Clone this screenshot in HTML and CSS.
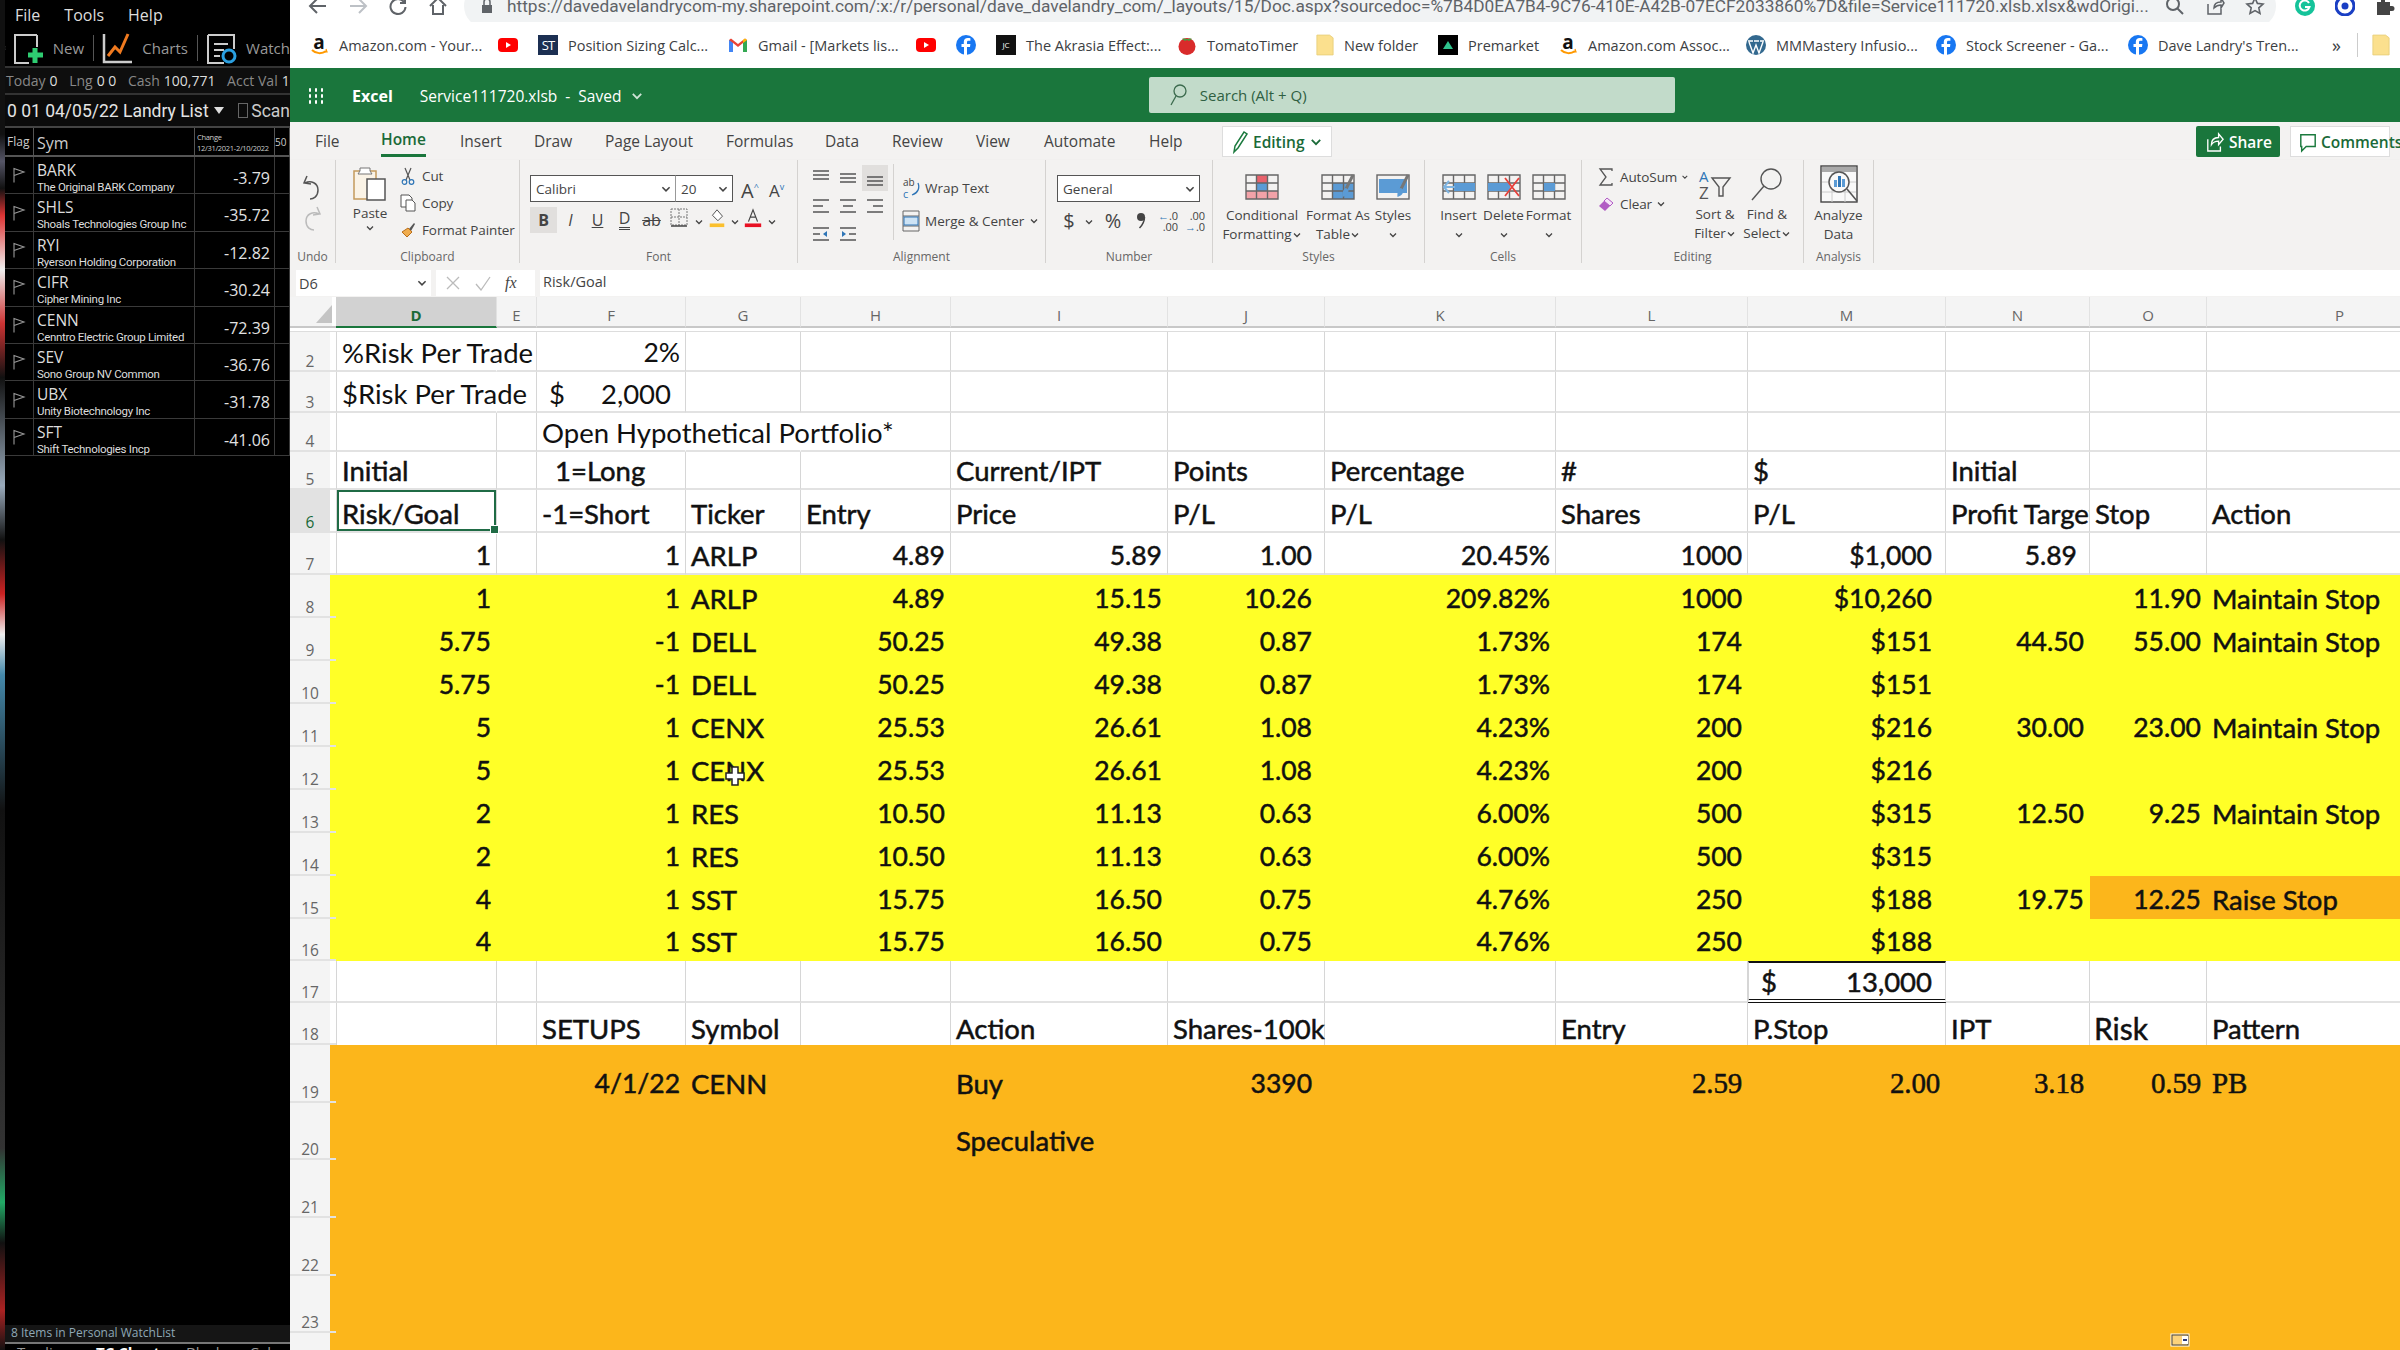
FILE: index.html
```html
<!DOCTYPE html>
<html lang="en">
<head>
    <meta charset="UTF-8">
    <title>Service111720.xlsb</title>
    <link rel="stylesheet" href="styles.css">
</head>
<body>
<svg class="sprite">
    <symbol id="chev" viewBox="0 0 10 10"><path d="M2 3.5l3 3 3-3" fill="none" stroke="currentColor" stroke-width="1.3"></path></symbol>
    <symbol id="yt" viewBox="0 0 20 20"><rect x="0" y="3" width="20" height="14" rx="4" fill="#f00"></rect><path d="M8 7l5 3-5 3z" fill="#fff"></path></symbol>
    <symbol id="fb" viewBox="0 0 20 20"><circle cx="10" cy="10" r="10" fill="#1877f2"></circle><path d="M11 20v-8h3l.4-3H11V7.300c0-1 .4-1.500 1.600-1.500h1.800V3.200c-1-.1-1.800-.2-2.600-.2-2.500 0-4 1.500-4 4V9H5.500v3H8v8z" fill="#fff"></path></symbol>
    <symbol id="folder" viewBox="0 0 20 24"><path d="M1 1h14l4 3v19H1z" fill="#fbe08e" stroke="#e9cf7c"></path></symbol>
    <symbol id="amz" viewBox="0 0 20 24"><path d="M3 17c4 4 10 4 14 1" fill="none" stroke="#f90" stroke-width="2"></path><path d="M17 16l1 3-3 0" fill="none" stroke="#f90" stroke-width="1.200"></path></symbol>
    <symbol id="cellgrid" viewBox="0 0 34 26"><path d="M1 1h32v24H1zM1 9h32M1 17h32M11.500 1v24M22.500 1v24" fill="none" stroke="#666" stroke-width="1.400"></path></symbol>
    <symbol id="brush" viewBox="0 0 14 26"><path d="M12 1L5 15" stroke="#777" stroke-width="3" fill="none"></path><path d="M5 14c-3 1-4 5-3.500 9 3-1 6-3 6-7z" fill="#5b9bd5"></path></symbol>
    <symbol id="al-l" viewBox="0 0 18 18"><path d="M1 3h16M1 9h10M1 15h16" stroke="#555" stroke-width="1.300"></path></symbol>
    <symbol id="al-c" viewBox="0 0 18 18"><path d="M1 3h16M4 9h10M1 15h16" stroke="#555" stroke-width="1.300"></path></symbol>
    <symbol id="al-r" viewBox="0 0 18 18"><path d="M1 3h16M7 9h10M1 15h16" stroke="#555" stroke-width="1.300"></path></symbol>
    <symbol id="al-t" viewBox="0 0 18 18"><path d="M1 2h16M1 6h16M1 10h16" stroke="#555" stroke-width="1.300"></path></symbol>
    <symbol id="al-m" viewBox="0 0 18 18"><path d="M1 5h16M1 9h16M1 13h16" stroke="#555" stroke-width="1.300"></path></symbol>
    <symbol id="al-b" viewBox="0 0 18 18"><path d="M1 8h16M1 12h16M1 16h16" stroke="#555" stroke-width="1.300"></path></symbol>
    <symbol id="flag" viewBox="0 0 14 16"><path d="M2 15.500V1.500l10 3.500L2 8.500" fill="none" stroke="#999" stroke-width="1.100"></path></symbol>
</svg>

<div class="page">
    <aside class="side">
        <div class="side-menu"><span>File</span><span>Tools</span><span>Help</span></div>
        <div class="side-tools">
            <svg class="grip" viewBox="0 0 4 24"><path d="M2 3v2M2 11v2M2 19v2" stroke="#999" stroke-width="3"></path></svg>
            <svg class="tool-ico" viewBox="0 0 32 32"><path d="M24 3H2v28h14" fill="none" stroke="#ccc" stroke-width="2"></path><path d="M24 3v12" stroke="#ccc" stroke-width="2"></path><path d="M22 16v15M15 23h15" stroke="#2ecc71" stroke-width="5"></path></svg>
            <span class="tool-txt">New</span><i class="tool-sep"></i>
            <svg class="tool-ico" viewBox="0 0 32 32"><path d="M2 2v28h28" fill="none" stroke="#ccc" stroke-width="2.500"></path><path d="M6 24l7-9 5 5 8-18" fill="none" stroke="#f07a1f" stroke-width="3"></path></svg>
            <span class="tool-txt">Charts</span><i class="tool-sep"></i>
            <svg class="tool-ico" viewBox="0 0 32 32"><path d="M2 3h26v14M2 3v28h16" fill="none" stroke="#ccc" stroke-width="2"></path><path d="M8 12h14M8 18h10M8 24h6" stroke="#ccc" stroke-width="2"></path><circle cx="23" cy="24" r="6" fill="none" stroke="#2a9fe0" stroke-width="3"></circle></svg>
            <span class="tool-txt">Watch</span>
        </div>
        <div class="side-stats"><span>Today</span> <b>0</b> &nbsp;<span>Lng</span> <b>0 0</b> &nbsp;<span>Cash</span> <b>100,771</b> &nbsp;<span>Acct Val</span> <b>100</b></div>
        <div class="side-title">
            <span>0 01 04/05/22 Landry List</span><i class="caret"></i><i class="check"></i><span class="scan">Scan</span>
        </div>
        <div class="wl-head">
            <span class="wl-flag">Flag</span>
            <span class="wl-sym">Sym</span>
            <span class="wl-chg">Change<br>12/31/2021-2/10/2022</span>
            <span class="wl-50">50</span>
        </div>
        <div class="wl-row"><span class="wl-f"><svg><use href="#flag"></use></svg></span><span class="wl-n"><b>BARK</b><small>The Original BARK Company</small></span><span class="wl-v">-3.79</span><span></span></div>
        <div class="wl-row"><span class="wl-f"><svg><use href="#flag"></use></svg></span><span class="wl-n"><b>SHLS</b><small>Shoals Technologies Group Inc</small></span><span class="wl-v">-35.72</span><span></span></div>
        <div class="wl-row"><span class="wl-f"><svg><use href="#flag"></use></svg></span><span class="wl-n"><b>RYI</b><small>Ryerson Holding Corporation</small></span><span class="wl-v">-12.82</span><span></span></div>
        <div class="wl-row"><span class="wl-f"><svg><use href="#flag"></use></svg></span><span class="wl-n"><b>CIFR</b><small>Cipher Mining Inc</small></span><span class="wl-v">-30.24</span><span></span></div>
        <div class="wl-row"><span class="wl-f"><svg><use href="#flag"></use></svg></span><span class="wl-n"><b>CENN</b><small>Cenntro Electric Group Limited</small></span><span class="wl-v">-72.39</span><span></span></div>
        <div class="wl-row"><span class="wl-f"><svg><use href="#flag"></use></svg></span><span class="wl-n"><b>SEV</b><small>Sono Group NV Common</small></span><span class="wl-v">-36.76</span><span></span></div>
        <div class="wl-row"><span class="wl-f"><svg><use href="#flag"></use></svg></span><span class="wl-n"><b>UBX</b><small>Unity Biotechnology Inc</small></span><span class="wl-v">-31.78</span><span></span></div>
        <div class="wl-row"><span class="wl-f"><svg><use href="#flag"></use></svg></span><span class="wl-n"><b>SFT</b><small>Shift Technologies Incp</small></span><span class="wl-v">-41.06</span><span></span></div>
        <div class="side-fill"></div>
        <div class="side-status">8 Items in Personal WatchList</div>
        <div class="side-tabs"><span>Trading</span><span class="on">TC Chart</span><span>Block</span><span>Calc</span></div>
    </aside>

    <main class="main">
        <div class="urlbar">
            <div class="urlbar-in">
                <svg class="nav" viewBox="0 0 20 20"><path d="M18 10H3M9 3l-7 7 7 7" fill="none" stroke="#5f6368" stroke-width="2"></path></svg>
                <svg class="nav" viewBox="0 0 20 20"><path d="M2 10h15M11 3l7 7-7 7" fill="none" stroke="#bdc1c6" stroke-width="2"></path></svg>
                <svg class="nav" viewBox="0 0 20 20"><path d="M16 6a7.500 7.500 0 1 0 1.500 5M17 2v5h-5" fill="none" stroke="#5f6368" stroke-width="2"></path></svg>
                <svg class="nav" viewBox="0 0 20 20"><path d="M2 10l8-8 8 8M5 9v9h10V9" fill="none" stroke="#5f6368" stroke-width="2"></path></svg>
                <div class="pill">
                    <svg class="lock" viewBox="0 0 14 16"><rect x="2" y="7" width="10" height="8" fill="#5f6368"></rect><path d="M4 7V4a3 3 0 0 1 6 0v3" fill="none" stroke="#5f6368" stroke-width="1.500"></path></svg>
                    <span class="url">https://davedavelandrycom-my.sharepoint.com/:x:/r/personal/dave_davelandry_com/_layouts/15/Doc.aspx?sourcedoc=%7B4D0EA7B4-9C76-410E-A42B-07ECF2033860%7D&amp;file=Service111720.xlsb.xlsx&amp;wdOrigi...</span>
                    <svg class="pill-ico" viewBox="0 0 20 20"><circle cx="8" cy="8" r="6" fill="none" stroke="#5f6368" stroke-width="2"></circle><path d="M12 12l6 6" stroke="#5f6368" stroke-width="2"></path></svg>
                    <svg class="pill-ico" viewBox="0 0 20 20"><path d="M3 8v10h13v-5M9 12c0-4 3-6 7-6V2l3 5-3 5V9c-3 0-5 1-7 3z" fill="none" stroke="#5f6368" stroke-width="1.500"></path></svg>
                    <svg class="pill-ico" viewBox="0 0 20 20"><path d="M10 2l2.400 5.400 5.600.6-4.200 3.800 1.200 5.700-5-2.900-5 2.900 1.200-5.700L2 8l5.600-.6z" fill="none" stroke="#5f6368" stroke-width="1.600"></path></svg>
                </div>
                <div class="exts">
                    <svg viewBox="0 0 20 20"><circle cx="10" cy="10" r="10" fill="#15c39a"></circle><path d="M14 7a5 5 0 1 0 .5 4H10" fill="none" stroke="#fff" stroke-width="2"></path></svg>
                    <svg viewBox="0 0 20 20"><circle cx="10" cy="10" r="9" fill="#fff" stroke="#1a3fc4" stroke-width="3"></circle><circle cx="10" cy="10" r="3.500" fill="#1a3fc4"></circle></svg>
                    <svg viewBox="0 0 20 20"><path d="M2 6h4V3a2 2 0 0 1 4 0v3h5v4h2a2.500 2.500 0 0 1 0 5h-2v4H2z" fill="#444"></path></svg>
                </div>
            </div>
        </div>

        <div class="bookmarks">
            <span class="bm"><span class="fav-a"><b>a</b><svg><use href="#amz"></use></svg></span>Amazon.com - Your...</span>
            <span class="bm"><svg class="fav"><use href="#yt"></use></svg></span>
            <span class="bm"><span class="fav-st">ST</span>Position Sizing Calc...</span>
            <span class="bm"><svg class="fav" viewBox="0 0 20 20"><path d="M1 17V5l2-1.500L10 9l7-5.500L19 5v12h-4V8l-5 4-5-4v9z" fill="#ea4335"></path><path d="M1 5v12h4V8z" fill="#4285f4"></path><path d="M19 5v12h-4V8z" fill="#34a853"></path><path d="M15 8l4-3-2-1.500-2 1.500z" fill="#fbbc04"></path></svg>Gmail - [Markets lis...</span>
            <span class="bm"><svg class="fav"><use href="#yt"></use></svg></span>
            <span class="bm"><svg class="fav"><use href="#fb"></use></svg></span>
            <span class="bm"><span class="fav-jc">JC</span>The Akrasia Effect:...</span>
            <span class="bm"><svg class="fav" viewBox="0 0 20 20"><circle cx="10" cy="11.500" r="8.500" fill="#d92b2b"></circle><path d="M5 4c2-1 3 0 5 0s3-1 5 0l-3 2-2-1-2 1z" fill="#4a9b3f"></path></svg>TomatoTimer</span>
            <span class="bm"><svg class="fav-f"><use href="#folder"></use></svg>New folder</span>
            <span class="bm"><svg class="fav" viewBox="0 0 20 20"><rect width="20" height="20" fill="#000"></rect><path d="M10 6l5 8H5z" fill="#2fc38d"></path></svg>Premarket</span>
            <span class="bm"><span class="fav-a"><b>a</b><svg><use href="#amz"></use></svg></span>Amazon.com Assoc...</span>
            <span class="bm"><svg class="fav" viewBox="0 0 20 20"><circle cx="10" cy="10" r="10" fill="#33698f"></circle><path d="M3 7l4 11 3-8 3 8 4-11M2 6h5M8 6h5M14 6h4" fill="none" stroke="#fff" stroke-width="1.400"></path></svg>MMMastery Infusio...</span>
            <span class="bm"><svg class="fav"><use href="#fb"></use></svg>Stock Screener - Ga...</span>
            <span class="bm"><svg class="fav"><use href="#fb"></use></svg>Dave Landry's Tren...</span>
            <span class="bm more">&raquo;</span>
            <span class="bm"><svg class="fav-f"><use href="#folder"></use></svg></span>
        </div>

        <div class="xl-bar">
            <svg class="waffle" viewBox="0 0 18 18"><path d="M2 3h2M8 3h2M14 3h2M2 9h2M8 9h2M14 9h2M2 15h2M8 15h2M14 15h2" stroke="#fff" stroke-width="3.400"></path></svg>
            <b class="xl-name">Excel</b>
            <span class="xl-file">Service111720.xlsb &nbsp;-&nbsp; Saved</span>
            <svg class="xl-chev"><use href="#chev"></use></svg>
            <div class="xl-search">
                <svg viewBox="0 0 18 24"><circle cx="11" cy="8" r="6" fill="none" stroke="#3c6b4e" stroke-width="1.300"></circle><path d="M7 13l-5 9" stroke="#3c6b4e" stroke-width="1.300"></path></svg>
                Search (Alt + Q)
            </div>
        </div>

        <div class="tabs">
            <span>File</span><span class="tab-on">Home</span><span>Insert</span><span>Draw</span><span>Page Layout</span><span>Formulas</span><span>Data</span><span>Review</span><span>View</span><span>Automate</span><span>Help</span>
            <span class="editing">
                <svg viewBox="0 0 18 24"><path d="M3 22l1-6L13 2l3 2-9 14zM3 22l4-4" fill="none" stroke="#1b7a3e" stroke-width="1.500"></path></svg>
                Editing
                <svg class="ed-chev"><use href="#chev"></use></svg>
            </span>
            <span class="share">
                <svg viewBox="0 0 20 24"><path d="M2 9v13h14v-5M6 15c0-5 3-8 8-8V3l5 6-5 6v-4c-4 0-6 1-8 4z" fill="none" stroke="#fff" stroke-width="1.500"></path></svg>
                Share
            </span>
            <span class="comments">
                <svg viewBox="0 0 20 24"><path d="M2 4h16v13H8l-5 5v-5H2z" fill="none" stroke="#1b7a3e" stroke-width="1.600"></path></svg>
                Comments
            </span>
        </div>

        <div class="ribbon">
            <div class="group g-undo">
                <div class="group-body col">
                    <svg class="undo" viewBox="0 0 20 28"><path d="M5 2L2 9l7 1M3 9c6-3 13 0 13 7s-5 9-8 9" fill="none" stroke="#555" stroke-width="1.500"></path></svg>
                    <svg class="undo" viewBox="0 0 20 28"><path d="M15 2l3 7-7 1M17 9C11 6 4 9 4 16s5 9 8 9" fill="none" stroke="#bbb" stroke-width="1.500"></path></svg>
                </div>
                <div class="group-label">Undo</div>
            </div>

            <div class="group g-clip">
                <div class="group-body">
                    <div class="big paste">
                        <svg viewBox="0 0 36 36"><rect x="2" y="6" width="22" height="28" fill="#faf3e6" stroke="#c49a5c" stroke-width="1.500"></rect><path d="M8 6V3h10v3l2 3H6z" fill="#fff" stroke="#777"></path><rect x="15" y="14" width="18" height="21" fill="#fff" stroke="#555" stroke-width="1.500"></rect></svg>
                        <span>Paste</span>
                        <svg class="chev"><use href="#chev"></use></svg>
                    </div>
                    <div class="small-list">
                        <span><svg viewBox="0 0 16 18"><path d="M5 1l5 12M11 1L6 13" stroke="#555" stroke-width="1.200"></path><circle cx="4.500" cy="15" r="2.300" fill="none" stroke="#2e75b6" stroke-width="1.200"></circle><circle cx="11.500" cy="15" r="2.300" fill="none" stroke="#2e75b6" stroke-width="1.200"></circle></svg>Cut</span>
                        <span><svg viewBox="0 0 16 18"><path d="M1 1h8l3 3v9H1z" fill="#fff" stroke="#555"></path><path d="M6 6h6l3 3v8H6z" fill="#fff" stroke="#555"></path></svg>Copy</span>
                        <span><svg viewBox="0 0 16 18"><path d="M9 8l5-6 1 1-4 7z" fill="#555"></path><path d="M8 7l4 4-5 5-5-5z" fill="#f0ad4e" stroke="#b96e1a"></path></svg>Format Painter</span>
                    </div>
                </div>
                <div class="group-label">Clipboard</div>
            </div>

            <div class="group g-font">
                <div class="group-body col">
                    <div class="font-top">
                        <span class="combo font-name">Calibri<svg><use href="#chev"></use></svg></span>
                        <span class="combo font-size">20<svg><use href="#chev"></use></svg></span>
                        <span class="grow">A<sup>^</sup></span>
                        <span class="shrink">A<sup>v</sup></span>
                    </div>
                    <div class="font-bot">
                        <span class="fb-on"><b>B</b></span>
                        <span><i>I</i></span>
                        <span><u>U</u></span>
                        <span class="dbl">D</span>
                        <span><s>ab</s></span>
                        <span><svg viewBox="0 0 18 20"><path d="M1 1h16v16H1zM9 1v16M1 9h16" fill="none" stroke="#777" stroke-dasharray="2 1"></path><path d="M1 18h16" stroke="#444" stroke-width="1.500"></path></svg></span>
                        <span><svg class="chev"><use href="#chev"></use></svg></span>
                        <span><svg viewBox="0 0 18 22"><path d="M9 2l6 7-5 5-6-6z" fill="#fff" stroke="#444"></path><rect x="1" y="17" width="16" height="4" fill="#fbc02d"></rect></svg></span>
                        <span><svg class="chev"><use href="#chev"></use></svg></span>
                        <span><svg viewBox="0 0 18 22"><path d="M4 15L9 2l5 13M6 10h6" fill="none" stroke="#444" stroke-width="1.300"></path><rect x="0" y="17" width="18" height="4" fill="#e81123"></rect></svg></span>
                        <span><svg class="chev"><use href="#chev"></use></svg></span>
                    </div>
                </div>
                <div class="group-label">Font</div>
            </div>

            <div class="group g-align">
                <div class="group-body">
                    <div class="align-grid">
                        <span><svg><use href="#al-t"></use></svg></span><span><svg><use href="#al-m"></use></svg></span><span class="al-on"><svg><use href="#al-b"></use></svg></span>
                        <span><svg><use href="#al-l"></use></svg></span><span><svg><use href="#al-c"></use></svg></span><span><svg><use href="#al-r"></use></svg></span>
                        <span><svg viewBox="0 0 18 18"><path d="M1 3h16M1 9h7M1 15h16" stroke="#555" stroke-width="1.300"></path><path d="M15 6l-4 3 4 3z" fill="#2e75b6"></path></svg></span>
                        <span><svg viewBox="0 0 18 18"><path d="M1 3h16M10 9h7M1 15h16" stroke="#555" stroke-width="1.300"></path><path d="M3 6l4 3-4 3z" fill="#2e75b6"></path></svg></span>
                    </div>
                    <div class="align-right">
                        <span><svg viewBox="0 0 18 24"><text x="1" y="10" class="wrap-t">ab</text><text x="1" y="22" class="wrap-c">c</text><path d="M16 7c2 5 0 10-6 12" fill="none" stroke="#2e75b6" stroke-width="1.300"></path></svg>Wrap Text</span>
                        <span><svg viewBox="0 0 18 24"><path d="M1 2h16v20H1zM1 7h16M1 17h16" fill="none" stroke="#666"></path><rect x="2" y="8" width="14" height="8" fill="#cde3f5" stroke="#2e75b6"></rect></svg>Merge &amp; Center<svg class="chev"><use href="#chev"></use></svg></span>
                    </div>
                </div>
                <div class="group-label">Alignment</div>
            </div>

            <div class="group g-num">
                <div class="group-body col">
                    <span class="combo num-name">General<svg><use href="#chev"></use></svg></span>
                    <div class="num-bot">
                        <span class="n-dollar">$</span>
                        <span><svg class="chev"><use href="#chev"></use></svg></span>
                        <span class="n-pct">%</span>
                        <span><svg class="n-comma" viewBox="0 0 10 18"><circle cx="5" cy="5" r="4" fill="#444"></circle><path d="M8.500 5c0 5-2 8-5 11" fill="none" stroke="#444" stroke-width="1.500"></path></svg></span>
                        <span class="n-dec"><em>&larr;</em>.0<br>.00</span>
                        <span class="n-dec">.00<br><em>&rarr;</em>.0</span>
                    </div>
                </div>
                <div class="group-label">Number</div>
            </div>

            <div class="group g-styles">
                <div class="group-body">
                    <div class="big w-cond">
                        <svg class="ico34" viewBox="0 0 34 26"><rect x="11" y="1" width="12" height="8" fill="#e8626c"></rect><rect x="1" y="17" width="32" height="8" fill="#f2a2a8"></rect><rect x="11" y="9" width="11" height="8" fill="#5b9bd5"></rect><use href="#cellgrid"></use></svg>
                        <span>Conditional</span>
                        <span>Formatting<svg class="chev"><use href="#chev"></use></svg></span>
                    </div>
                    <div class="big w-fmt">
                        <svg class="ico34" viewBox="0 0 34 26"><rect x="12" y="9" width="21" height="16" fill="#5b9bd5"></rect><use href="#cellgrid"></use><use href="#brush" x="20" width="14" height="26"></use></svg>
                        <span>Format As</span>
                        <span>Table<svg class="chev"><use href="#chev"></use></svg></span>
                    </div>
                    <div class="big w-sty">
                        <svg class="ico34" viewBox="0 0 34 26"><rect x="1" y="1" width="32" height="24" fill="none" stroke="#666" stroke-width="1.400"></rect><rect x="3" y="5" width="28" height="14" fill="#5b9bd5"></rect><use href="#brush" x="20" width="14" height="26"></use></svg>
                        <span>Styles</span>
                        <span><svg class="chev"><use href="#chev"></use></svg></span>
                    </div>
                </div>
                <div class="group-label">Styles</div>
            </div>

            <div class="group g-cells">
                <div class="group-body">
                    <div class="big w-cell">
                        <svg class="ico34" viewBox="0 0 34 26"><use href="#cellgrid"></use><rect x="12" y="9" width="21" height="8" fill="#5b9bd5"></rect><path d="M2 13h11M7 7l-5 6 5 6" fill="none" stroke="#7db3e0" stroke-width="2"></path></svg>
                        <span>Insert</span>
                        <span><svg class="chev"><use href="#chev"></use></svg></span>
                    </div>
                    <div class="big w-cell">
                        <svg class="ico34" viewBox="0 0 34 26"><use href="#cellgrid"></use><rect x="1" y="9" width="22" height="8" fill="#5b9bd5"></rect><path d="M18 4l14 18M32 4L18 22" stroke="#e8403a" stroke-width="1.800"></path></svg>
                        <span>Delete</span>
                        <span><svg class="chev"><use href="#chev"></use></svg></span>
                    </div>
                    <div class="big w-cell">
                        <svg class="ico34" viewBox="0 0 34 26"><use href="#cellgrid"></use><rect x="12" y="9" width="11" height="8" fill="#5b9bd5"></rect></svg>
                        <span>Format</span>
                        <span><svg class="chev"><use href="#chev"></use></svg></span>
                    </div>
                </div>
                <div class="group-label">Cells</div>
            </div>

            <div class="group g-edit">
                <div class="group-body">
                    <div class="small-list edit-list">
                        <span><svg viewBox="0 0 16 18"><path d="M14 3V1H2l6 8-6 8h12v-2" fill="none" stroke="#555" stroke-width="1.300"></path></svg>AutoSum<svg class="chev"><use href="#chev"></use></svg></span>
                        <span><svg viewBox="0 0 16 18"><path d="M1 11l8-8 6 5-8 8z" fill="#b15cc4"></path><path d="M6 6l6 5 3-3-6-5z" fill="#f5e5f8" stroke="#b15cc4"></path></svg>Clear<svg class="chev"><use href="#chev"></use></svg></span>
                    </div>
                    <div class="big w-sort">
                        <svg class="ico34" viewBox="0 0 34 34"><text x="1" y="14" class="az-a">A</text><text x="1" y="31" class="az-z">Z</text><path d="M14 10h18l-7 9v9h-4v-9z" fill="none" stroke="#555" stroke-width="1.400"></path></svg>
                        <span>Sort &amp;</span>
                        <span>Filter<svg class="chev"><use href="#chev"></use></svg></span>
                    </div>
                    <div class="big w-find">
                        <svg class="ico34" viewBox="0 0 34 34"><circle cx="21" cy="11" r="10" fill="none" stroke="#555" stroke-width="1.400"></circle><path d="M14 18L2 32" stroke="#555" stroke-width="1.400"></path></svg>
                        <span>Find &amp;</span>
                        <span>Select<svg class="chev"><use href="#chev"></use></svg></span>
                    </div>
                </div>
                <div class="group-label">Editing</div>
            </div>

            <div class="group g-ana">
                <div class="group-body">
                    <div class="big w-ana">
                        <svg viewBox="0 0 38 38"><rect x="1" y="1" width="36" height="36" fill="#f9f9f9" stroke="#444" stroke-width="1.400"></rect><rect x="2" y="2" width="34" height="5" fill="#aaa"></rect><path d="M2 17h34M2 27h34M12 8v29M25 8v29" stroke="#ccc"></path><circle cx="19" cy="17" r="10" fill="#f9f9f9" stroke="#555" stroke-width="1.500"></circle><path d="M27 24l10 12" stroke="#555" stroke-width="1.600"></path><rect x="14" y="15" width="3" height="7" fill="#5b9bd5"></rect><rect x="18" y="11" width="3" height="11" fill="#2e75b6"></rect><rect x="22" y="14" width="3" height="8" fill="#5b9bd5"></rect></svg>
                        <span>Analyze</span>
                        <span>Data</span>
                    </div>
                </div>
                <div class="group-label">Analysis</div>
            </div>
        </div>

        <div class="fbar">
            <span class="namebox">D6<svg><use href="#chev"></use></svg></span>
            <span class="fxbtns">
                <svg viewBox="0 0 16 16"><path d="M2 2l12 12M14 2L2 14" stroke="#bbb" stroke-width="1.300"></path></svg>
                <svg viewBox="0 0 16 16"><path d="M1 9l5 6L15 2" fill="none" stroke="#bbb" stroke-width="1.300"></path></svg>
                <i>fx</i>
            </span>
            <span class="finput">Risk/Goal</span>
        </div>

        <div class="sheet">
            <table class="grid">
                <colgroup>
                    <col class="c-h"><col class="c-d"><col class="c-e"><col class="c-f"><col class="c-g"><col class="c-h2"><col class="c-i"><col class="c-j"><col class="c-k"><col class="c-l"><col class="c-m"><col class="c-n"><col class="c-o"><col class="c-p">
                </colgroup>
                <thead>
                    <tr class="col-head">
                        <th class="corner"><svg viewBox="0 0 16 18"><path d="M16 0v18H0z" fill="#c4c4c4"></path></svg></th>
                        <th class="sel">D</th><th>E</th><th>F</th><th>G</th><th>H</th><th>I</th><th>J</th><th>K</th><th>L</th><th>M</th><th>N</th><th>O</th><th>P</th>
                    </tr>
                    <tr class="hidden-row"><th colspan="14"></th></tr>
                </thead>
                <tbody>
                    <tr class="h40"><th>2</th><td class="nb">%Risk Per Trade</td><td></td><td class="r">2%</td><td></td><td></td><td></td><td></td><td></td><td></td><td></td><td></td><td></td><td></td></tr>
                    <tr class="h41"><th>3</th><td class="nb">$Risk Per Trade</td><td></td><td><span class="acct a-f"><span>$</span><span>2,000</span></span></td><td></td><td></td><td></td><td></td><td></td><td></td><td></td><td></td><td></td><td></td></tr>
                    <tr class="h39"><th>4</th><td></td><td></td><td class="nb">Open Hypothetical Portfolio*</td><td class="nb"></td><td></td><td></td><td></td><td></td><td></td><td></td><td></td><td></td><td></td><td></td></tr>
                    <tr class="h38 b"><th>5</th><td>Initial</td><td></td><td class="ind">1=Long</td><td></td><td></td><td>Current/IPT</td><td>Points</td><td>Percentage</td><td>#</td><td>$</td><td>Initial</td><td></td><td></td></tr>
                    <tr class="h43 b"><th class="row-sel">6</th><td class="active">Risk/Goal</td><td></td><td>-1=Short</td><td>Ticker</td><td>Entry</td><td>Price</td><td>P/L</td><td>P/L</td><td>Shares</td><td>P/L</td><td class="clip">Profit Target</td><td>Stop</td><td>Action</td></tr>
                    <tr class="h42 b"><th>7</th><td class="r">1</td><td></td><td class="r">1</td><td>ARLP</td><td class="r">4.89</td><td class="r">5.89</td><td class="r">1.00</td><td class="r">20.45%</td><td class="r">1000</td><td class="r">$1,000</td><td class="r acc">5.89</td><td></td><td></td></tr>
                    <tr class="h43 b y"><th>8</th><td class="r">1</td><td></td><td class="r">1</td><td>ARLP</td><td class="r">4.89</td><td class="r">15.15</td><td class="r">10.26</td><td class="r">209.82%</td><td class="r">1000</td><td class="r">$10,260</td><td></td><td class="r">11.90</td><td>Maintain Stop</td></tr>
                    <tr class="h43 b y"><th>9</th><td class="r">5.75</td><td></td><td class="r">-1</td><td>DELL</td><td class="r">50.25</td><td class="r">49.38</td><td class="r">0.87</td><td class="r">1.73%</td><td class="r">174</td><td class="r">$151</td><td class="r">44.50</td><td class="r">55.00</td><td>Maintain Stop</td></tr>
                    <tr class="h43 b y"><th>10</th><td class="r">5.75</td><td></td><td class="r">-1</td><td>DELL</td><td class="r">50.25</td><td class="r">49.38</td><td class="r">0.87</td><td class="r">1.73%</td><td class="r">174</td><td class="r">$151</td><td></td><td></td><td></td></tr>
                    <tr class="h43 b y"><th>11</th><td class="r">5</td><td></td><td class="r">1</td><td>CENX</td><td class="r">25.53</td><td class="r">26.61</td><td class="r">1.08</td><td class="r">4.23%</td><td class="r">200</td><td class="r">$216</td><td class="r">30.00</td><td class="r">23.00</td><td>Maintain Stop</td></tr>
                    <tr class="h43 b y"><th>12</th><td class="r">5</td><td></td><td class="r">1</td><td>CENX</td><td class="r">25.53</td><td class="r">26.61</td><td class="r">1.08</td><td class="r">4.23%</td><td class="r">200</td><td class="r">$216</td><td></td><td></td><td></td></tr>
                    <tr class="h43 b y"><th>13</th><td class="r">2</td><td></td><td class="r">1</td><td>RES</td><td class="r">10.50</td><td class="r">11.13</td><td class="r">0.63</td><td class="r">6.00%</td><td class="r">500</td><td class="r">$315</td><td class="r">12.50</td><td class="r">9.25</td><td>Maintain Stop</td></tr>
                    <tr class="h43 b y"><th>14</th><td class="r">2</td><td></td><td class="r">1</td><td>RES</td><td class="r">10.50</td><td class="r">11.13</td><td class="r">0.63</td><td class="r">6.00%</td><td class="r">500</td><td class="r">$315</td><td></td><td></td><td></td></tr>
                    <tr class="h43 b y"><th>15</th><td class="r">4</td><td></td><td class="r">1</td><td>SST</td><td class="r">15.75</td><td class="r">16.50</td><td class="r">0.75</td><td class="r">4.76%</td><td class="r">250</td><td class="r">$188</td><td class="r">19.75</td><td class="r o">12.25</td><td class="o">Raise Stop</td></tr>
                    <tr class="h42 b y"><th>16</th><td class="r">4</td><td></td><td class="r">1</td><td>SST</td><td class="r">15.75</td><td class="r">16.50</td><td class="r">0.75</td><td class="r">4.76%</td><td class="r">250</td><td class="r">$188</td><td></td><td></td><td></td></tr>
                    <tr class="h42 b"><th>17</th><td></td><td></td><td></td><td></td><td></td><td></td><td></td><td></td><td></td><td class="total"><span class="acct a-m"><span>$</span><span>13,000</span></span></td><td></td><td></td><td></td></tr>
                    <tr class="h42 b low"><th>18</th><td></td><td></td><td>SETUPS</td><td>Symbol</td><td></td><td>Action</td><td>Shares-100k</td><td></td><td>Entry</td><td>P.Stop</td><td>IPT</td><td class="big-t">Risk</td><td>Pattern</td></tr>
                    <tr class="h58 b or"><th>19</th><td></td><td></td><td class="r">4/1/22</td><td>CENN</td><td></td><td>Buy</td><td class="r">3390</td><td></td><td class="r serif">2.59</td><td class="r serif m5">2.00</td><td class="r serif">3.18</td><td class="r serif">0.59</td><td class="serif">PB</td></tr>
                    <tr class="h57 b or"><th>20</th><td></td><td></td><td></td><td></td><td></td><td>Speculative</td><td></td><td></td><td></td><td></td><td></td><td></td><td></td></tr>
                    <tr class="h58 or"><th>21</th><td colspan="13"></td></tr>
                    <tr class="h58 or"><th>22</th><td colspan="13"></td></tr>
                    <tr class="h57 or"><th>23</th><td colspan="13"></td></tr>
                    <tr class="h58 or"><th></th><td colspan="13"></td></tr>
                </tbody>
            </table>
            <svg class="xl-cursor" viewBox="0 0 20 20"><path d="M7 1h6v6h6v6h-6v6H7v-6H1V7h6z" fill="#fff" stroke="#222" stroke-width="1.500"></path></svg>
            <svg class="resize-ico" viewBox="0 0 20 14"><rect x="1" y="1" width="18" height="12" fill="#fcd27a" stroke="#fff"></rect><rect x="2" y="2" width="16" height="10" fill="none" stroke="#444"></rect><rect x="12" y="3" width="6" height="8" fill="#fff"></rect><rect x="13" y="6" width="4" height="2" fill="#2b3a7a"></rect></svg>
        </div>
    </main>
</div>
</body>
</html>
```

FILE: styles.css
```css
*{
    box-sizing: border-box;
}
html,body{
    margin: 0;
    height: 1350px;
    overflow: hidden;
    background: #fff;
    font-family: "Open Sans","Noto Sans",sans-serif;
}
.sprite{
    width: 0;
    height: 0;
    display: block;
}
.page{
    display: flex;
    width: 2400px;
    height: 1350px;
    overflow: hidden;
}

/* trading platform on the left */
.side{
    width: 290px;
    flex: none;
    height: 1350px;
    background: #000;
    color: #ccc;
    display: flex;
    flex-direction: column;
    overflow: hidden;
    border-left: 5px solid;
    border-image: linear-gradient(#111 10%,#556 12%,#111 14%,#d33 16%,#eee 20%,#c33 24%,#111 28%,#9ab 36%,#111 40%,#c22 44%,#eee 47%,#48a 50%,#111 60%,#333 85%,#2a6 89%,#111 92%,#a22 97%,#111) 1;
}
.side-menu{
    height: 30px;
    display: flex;
    gap: 24px;
    align-items: center;
    padding-left: 10px;
    font-size: 16px;
    color: #ddd;
}
.side-tools{
    height: 38px;
    display: flex;
    align-items: center;
    white-space: nowrap;
    border-bottom: 2px solid #333;
}
.grip{
    width: 4px;
    height: 24px;
    margin: 0 7px 0 0;
}
.tool-ico{
    width: 32px;
    height: 32px;
    flex: none;
}
.tool-txt{
    font-size: 15px;
    color: #999;
    margin-left: 8px;
}
.tool-sep{
    width: 1px;
    height: 26px;
    background: #555;
    margin: 0 9px 0 9px;
}
.side-stats{
    height: 27px;
    display: flex;
    align-items: center;
    gap: 4px;
    padding-left: 1px;
    font-size: 14px;
    white-space: nowrap;
    background: #0e0e0e;
    border-bottom: 2px solid #333;
    color: #888;
}
.side-stats b{
    font-weight: 400;
    color: #ddd;
}
.side-title{
    height: 33px;
    display: flex;
    align-items: center;
    padding-left: 2px;
    font-family: Roboto,sans-serif;
    font-size: 17.500px;
    white-space: nowrap;
    color: #e4e4e4;
    background: #0b0b0b;
    border-bottom: 2px solid #444;
}
.caret{
    width: 0;
    height: 0;
    margin-left: 5px;
    border: 5px solid transparent;
    border-top: 7px solid #ddd;
    border-bottom: 0;
}
.check{
    width: 14px;
    height: 15px;
    margin: 0 3px 0 14px;
    border: 1px solid #666;
}
.scan{
    color: #ccc;
}
.wl-head,.wl-row{
    display: grid;
    grid-template-columns: 29px 161px 80px 15px;
    flex: none;
}
.wl-head{
    height: 29px;
    border-bottom: 2px solid #555;
    align-items: center;
    white-space: nowrap;
}
.wl-head > span{
    height: 100%;
    border-right: 1px solid #555;
    display: flex;
    align-items: center;
}
.wl-flag{
    font-size: 12px;
    padding-left: 2px;
}
.wl-sym{
    font-size: 16px;
    padding: 3px 0 0 3px;
}
.wl-head .wl-chg{
    font-size: 7.500px;
    line-height: 11px;
    display: block;
    padding: 4px 0 0 2px;
    letter-spacing: -.3px;
}
.wl-50{
    font-size: 10px;
}
.wl-row{
    height: 37.400px;
    border-bottom: 1px solid #3a3a3a;
}
.wl-row > span{
    border-right: 1px solid #3a3a3a;
}
.wl-f{
    display: flex;
    align-items: center;
    justify-content: center;
}
.wl-f svg{
    width: 14px;
    height: 16px;
}
.wl-n{
    display: flex;
    flex-direction: column;
    padding: 4px 0 0 3px;
    white-space: nowrap;
    overflow: hidden;
}
.wl-n b{
    font-weight: 400;
    font-size: 15.500px;
    line-height: 19px;
    color: #ddd;
}
.wl-n small{
    font-family: Roboto,sans-serif;
    font-size: 11.500px;
    line-height: 14px;
    letter-spacing: -.3px;
    color: #ddd;
}
.wl-v{
    font-size: 16px;
    text-align: right;
    padding: 10px 4px 0 0;
    color: #e2e2e2;
}
.side-fill{
    flex: 1;
}
.side-status{
    height: 17px;
    flex: none;
    background: #151515;
    padding-left: 6px;
    font-size: 12px;
    line-height: 16px;
    color: #8fa8b5;
}
.side-tabs{
    height: 8px;
    flex: none;
    overflow: hidden;
    border-top: 2px solid #777;
    display: flex;
    gap: 26px;
    font-size: 15px;
    line-height: 16px;
    padding-left: 12px;
    color: #999;
}
.side-tabs .on{
    color: #fff;
    font-weight: 700;
}

/* browser chrome */
.main{
    width: 2110px;
    flex: none;
    display: flex;
    flex-direction: column;
    height: 1350px;
}
.urlbar{
    height: 22px;
    overflow: hidden;
    flex: none;
}
.urlbar-in{
    margin-top: -16px;
    height: 44px;
    display: flex;
    align-items: center;
    padding-left: 8px;
}
.nav{
    width: 20px;
    height: 20px;
    margin: 0 10px;
    flex: none;
}
.pill{
    width: 1812px;
    flex: none;
    height: 44px;
    background: #f1f3f4;
    border-radius: 22px;
    display: flex;
    align-items: center;
    padding-left: 16px;
    margin-left: 6px;
    white-space: nowrap;
}
.lock{
    width: 14px;
    height: 16px;
    flex: none;
}
.url{
    font-family: Roboto,sans-serif;
    font-size: 17.300px;
    color: #5f6368;
    margin-left: 13px;
    width: 1658px;
    flex: none;
    overflow: hidden;
}
.pill-ico{
    width: 20px;
    height: 20px;
    flex: none;
    margin-right: 20px;
}
.exts{
    display: flex;
    gap: 20px;
    margin-left: 19px;
}
.exts svg{
    width: 20px;
    height: 20px;
    flex: none;
}
.bookmarks{
    height: 46px;
    flex: none;
    display: grid;
    grid-template-columns: 189px 40px 190px 188px 40px 40px 181px 139px 122px 120px 188px 190px 192px 204px 40px 28px;
    align-items: center;
    padding-left: 19px;
    font-size: 14.500px;
    color: #3c4043;
    white-space: nowrap;
}
.bm{
    display: flex;
    align-items: center;
    gap: 10px;
}
.more{
    font-size: 18px;
    border-right: 1px solid #ccc;
    width: 26px;
}
.fav{
    width: 20px;
    height: 20px;
    flex: none;
}
.fav-f{
    width: 18px;
    height: 24px;
    flex: none;
}
.fav-a{
    width: 20px;
    height: 24px;
    position: relative;
    flex: none;
    font-size: 19px;
    line-height: 19px;
    text-align: center;
    color: #111;
}
.fav-a svg{
    position: absolute;
    left: 0;
    top: 0;
    width: 20px;
    height: 24px;
}
.fav-st{
    width: 20px;
    height: 20px;
    flex: none;
    background: #1c2f52;
    color: #fff;
    font-size: 13px;
    line-height: 20px;
    text-align: center;
    letter-spacing: -1px;
}
.fav-jc{
    width: 20px;
    height: 20px;
    flex: none;
    background: #111;
    color: #fff;
    font-size: 8px;
    line-height: 20px;
    text-align: center;
}

/* excel header */
.xl-bar{
    height: 54px;
    flex: none;
    background: #1a763c;
    display: flex;
    align-items: center;
    color: #fff;
    padding: 2px 0 0 17px;
    white-space: nowrap;
}
.waffle{
    width: 18px;
    height: 18px;
    flex: none;
}
.xl-name{
    font-size: 16px;
    margin-left: 27px;
}
.xl-file{
    font-size: 15.500px;
    margin-left: 27px;
    width: 204px;
}
.xl-chev{
    width: 14px;
    height: 14px;
    margin-left: 6px;
    color: #cfe3d6;
}
.xl-search{
    width: 526px;
    height: 36px;
    margin: -2px 0 0 505px;
    background: #c2dbca;
    border-radius: 2px;
    display: flex;
    align-items: center;
    gap: 13px;
    padding-left: 20px;
    font-size: 15px;
    color: #2f5f42;
}
.xl-search svg{
    width: 18px;
    height: 24px;
}

/* ribbon */
.tabs{
    height: 38px;
    flex: none;
    background: #f3f2f1;
    display: grid;
    grid-template-columns: 66px 79px 74px 71px 121px 99px 67px 84px 68px 105px 73px 110px 864px 84px 110px;
    align-items: center;
    padding-left: 25px;
    font-size: 15.500px;
    color: #444;
    white-space: nowrap;
    overflow: hidden;
    position: relative;
}
.tab-on{
    font-weight: 600;
    justify-self: start;
    height: 35px;
    padding-top: 6px;
    align-self: start;
    margin-top: 0;
    border-bottom: 3px solid #1a763c;
    color: #1a6a38;
}
.editing,.share,.comments{
    height: 31px;
    display: flex;
    align-items: center;
    gap: 4px;
    font-size: 15.500px;
    font-weight: 600;
    margin-top: 1px;
}
.editing{
    border: 1px solid #ddd;
    background: #fff;
    color: #1a6a38;
    padding-left: 8px;
}
.editing svg,.share svg,.comments svg{
    width: 18px;
    height: 24px;
    flex: none;
}
.editing .ed-chev{
    width: 14px;
    height: 14px;
}
.share{
    grid-column: 14;
    background: #1a763c;
    color: #fff;
    border-radius: 2px;
    padding-left: 10px;
    gap: 5px;
}
.comments{
    grid-column: 15;
    margin-left: 10px;
    background: #fff;
    border: 1px solid #ddd;
    color: #1a6a38;
    padding-left: 8px;
    font-weight: 600;
}
.ribbon{
    height: 105px;
    flex: none;
    background: #f3f2f1;
    display: grid;
    grid-template-columns: 46px 184px 278px 248px 167px 212px 157px 222px 70px;
    padding-bottom: 2px;
    box-shadow: 0 2px 3px rgba(0,0,0,.18);
    position: relative;
    font-size: 13.500px;
    color: #444;
    white-space: nowrap;
}
.group{
    display: flex;
    flex-direction: column;
    height: 103px;
    padding-top: 3px;
    border-right: 1px solid #d4d2d0;
}
.group-body{
    flex: 1;
    display: flex;
    min-height: 0;
}
.col{
    flex-direction: column;
}
.group-label{
    height: 20px;
    flex: none;
    text-align: center;
    font-size: 12px;
    line-height: 27px;
    color: #666;
}
.chev{
    width: 10px;
    height: 10px;
    vertical-align: -1px;
}
.big{
    display: flex;
    flex-direction: column;
    align-items: center;
    line-height: 19px;
    flex: none;
}
.big > svg:first-child{
    width: 34px;
    height: 26px;
    margin: 11px 0 6px;
    flex: none;
}
.big span{
    height: 19px;
}
.undo{
    width: 20px;
    height: 28px;
    margin: 11px 0 3px 12px;
}
.undo + .undo{
    margin-top: 0;
}
.g-clip .group-body{
    padding-left: 17px;
}
.paste{
    width: 34px;
}
.big.paste > svg:first-child{
    width: 36px;
    height: 36px;
    margin: 2px 0 3px;
}
.small-list{
    margin-left: 13px;
    display: flex;
    flex-direction: column;
}
.small-list span{
    display: flex;
    align-items: center;
    height: 27px;
    gap: 6px;
    letter-spacing: -.1px;
}
.small-list span > svg:first-child{
    width: 16px;
    height: 18px;
    flex: none;
}
.combo{
    height: 27px;
    background: #fff;
    border: 1px solid #555;
    display: flex;
    align-items: center;
    justify-content: space-between;
    padding: 0 3px 0 5px;
}
.combo svg{
    width: 12px;
    height: 12px;
}
.font-top{
    display: flex;
    margin: 12px 0 0 10px;
    align-items: center;
}
.font-name{
    width: 146px;
    border-right: 1px solid #999;
}
.font-size{
    width: 57px;
    border-left: 0;
}
.grow,.shrink{
    font-size: 20px;
    margin-left: 8px;
    width: 20px;
    line-height: 20px;
}
.grow sup,.shrink sup{
    font-size: 9px;
    color: #2e75b6;
}
.shrink{
    font-size: 17px;
}
.font-bot{
    display: grid;
    grid-template-columns: 27px 27px 27px 27px 27px 27px 14px 21px 16px 20px 18px;
    margin: 5px 0 0 10px;
    height: 26px;
    align-items: center;
    justify-items: center;
    font-size: 16px;
}
.font-bot svg{
    width: 18px;
    height: 20px;
}
.font-bot svg.chev{
    width: 10px;
    height: 10px;
}
.fb-on{
    background: #e1dfdd;
    width: 27px;
    height: 26px;
    text-align: center;
    line-height: 26px;
}
.dbl{
    border-bottom: 3px double #444;
    line-height: 17px;
}
.g-align .group-body{
    padding: 1px 0 0 9px;
}
.align-grid{
    display: grid;
    grid-template-columns: 27px 27px 27px;
    grid-auto-rows: 28px;
    width: 81px;
    margin-right: 5px;
    align-items: center;
    justify-items: center;
}
.align-grid svg{
    width: 18px;
    height: 18px;
    display: block;
}
.al-on{
    background: #e1dfdd;
    padding: 4px;
}
.align-right{
    padding: 10px 0 0 8px;
    border-left: 1px solid #d4d2d0;
    display: flex;
    flex-direction: column;
    gap: 6px;
    height: 76px;
}
.align-right span{
    display: flex;
    align-items: center;
    gap: 5px;
    height: 27px;
}
.align-right span > svg:first-child{
    width: 18px;
    height: 24px;
    flex: none;
}
.wrap-t{
    font-size: 10px;
    fill: #444;
}
.wrap-c{
    font-size: 11px;
    fill: #2e75b6;
}
.g-num .group-body{
    padding-left: 11px;
}
.num-name{
    width: 143px;
    margin-top: 12px;
}
.num-bot{
    display: grid;
    grid-template-columns: 22px 18px 30px 26px 28px 26px;
    margin: 5px 0 0 1px;
    height: 26px;
    align-items: center;
    justify-items: center;
}
.n-dollar,.n-pct{
    font-size: 20px;
}
.n-comma{
    width: 10px;
    height: 18px;
    display: block;
}
.n-dec{
    font-size: 11px;
    line-height: 11px;
    text-align: right;
}
.n-dec em{
    font-style: normal;
    color: #2e75b6;
}
.g-styles .group-body{
    padding-left: 11px;
}
.w-cond{
    width: 76px;
}
.w-fmt{
    width: 76px;
}
.w-sty{
    width: 34px;
}
.g-cells .group-body{
    padding-left: 11px;
}
.w-cell{
    width: 45px;
}
.edit-list{
    margin-left: 16px;
    width: 91px;
}
.edit-list .chev{
    margin-left: -2px;
}
.w-sort,.w-find{
    width: 52px;
}
.big.w-sort > svg:first-child,.big.w-find > svg:first-child{
    width: 34px;
    height: 34px;
    margin: 5px 0 3px;
}
.az-a{
    font-size: 15px;
    fill: #2e75b6;
}
.az-z{
    font-size: 17px;
    fill: #555;
}
.w-ana{
    width: 69px;
}
.big.w-ana > svg:first-child{
    width: 38px;
    height: 38px;
    margin: 2px 0 3px;
}

/* formula bar */
.fbar{
    height: 32px;
    flex: none;
    background: #f3f2f1;
    display: flex;
    gap: 5px;
    padding: 5px 0 1px 6px;
    font-size: 14.500px;
    color: #444;
    position: relative;
}
.namebox{
    width: 135px;
    background: #fff;
    display: flex;
    align-items: center;
    justify-content: space-between;
    padding: 0 3px 0 3px;
}
.namebox svg{
    width: 12px;
    height: 12px;
}
.fxbtns{
    width: 99px;
    background: #fff;
    display: flex;
    align-items: center;
    gap: 14px;
    padding-left: 9px;
}
.fxbtns svg{
    width: 16px;
    height: 16px;
}
.fxbtns i{
    font-family: "Liberation Serif",serif;
    font-size: 16px;
}
.finput{
    flex: 1;
    background: #fff;
    padding-left: 3px;
    line-height: 24px;
}

/* sheet */
.sheet{
    flex: 1;
    overflow: hidden;
    position: relative;
}
.grid{
    table-layout: fixed;
    width: 2183px;
    border-collapse: separate;
    border-spacing: 0;
    font-family: Lato,sans-serif;
    font-size: 27.500px;
    color: #111;
}
.c-h{width: 46px;}
.c-d{width: 161px;}
.c-e{width: 40px;}
.c-f{width: 149px;}
.c-g{width: 115px;}
.c-h2{width: 150px;}
.c-i{width: 217px;}
.c-j{width: 157px;}
.c-k{width: 231px;}
.c-l{width: 192px;}
.c-m{width: 198px;}
.c-n{width: 144px;}
.c-o{width: 117px;}
.c-p{width: 266px;}
.col-head th{
    height: 31px;
    padding: 7px 0 0;
    font: 400 15px "Open Sans",sans-serif;
    color: #666;
    background: #f4f4f4;
    border-right: 1px solid #e2e2e2;
    border-bottom: 2px solid #c8c8c8;
}
.col-head .corner{
    padding: 4px 4px 0 0;
    text-align: right;
    border-right: 0;
    background: linear-gradient(90deg,#f4f4f4 42px,#fff 42px);
}
.corner svg{
    width: 16px;
    height: 18px;
    display: block;
    margin-left: auto;
}
.col-head .sel{
    background: #d2d2d2;
    color: #1a6a38;
    font-weight: 700;
    border-bottom: 2px solid #1a763c;
}
.hidden-row th{
    height: 4px;
    padding: 0;
    border-bottom: 1px solid #ddd;
    background: #fff;
}
tbody th{
    font: 400 15.500px/18px "Open Sans",sans-serif;
    color: #666;
    text-align: center;
    vertical-align: bottom;
    padding: 0 6px 0 0;
    background: linear-gradient(90deg,#f4f4f4 40px,transparent 40px);
    border-bottom: 2px solid #e2e2e2;
}
tbody td{
    vertical-align: bottom;
    white-space: nowrap;
    padding: 0 5px 1px;
    line-height: 33px;
    border-right: 1px solid #d6d6d6;
    border-bottom: 2px solid #e2e2e2;
}
tbody th + td{
    border-left: 1px solid #d6d6d6;
}
.h38 > *{height: 38px;}
.h39 > *{height: 39px;}
.h40 > *{height: 40px;}
.h41 > *{height: 41px;}
.h42 > *{height: 42px;}
.h43 > *{height: 43px;}
.h57 > *{height: 57px;}
.h58 > *{height: 58px;}
td.r{
    text-align: right;
    font-size: 26.500px;
}
td.nb{
    border-right-color: transparent;
}
td.ind{
    padding-left: 18px;
}
.b td{
    -webkit-text-stroke: .5px #111;
}
.low td{
    padding-bottom: 0;
    border-bottom-width: 0;
}
td.clip{
    overflow: hidden;
    text-overflow: clip;
    padding-right: 0;
}
tr > td:nth-child(8).r{
    padding-right: 12px;
}
tr > td:nth-child(11).r{
    padding-right: 13px;
}
td.acc{
    padding-right: 12px;
}
.y{
    background: #ffff27;
}
.or{
    background: #fcb61b;
}
.y td,.or td{
    border-color: transparent;
}
.y th + td,.or th + td{
    border-left-color: transparent;
}
td.o{
    background: #fcb61b;
}
.row-sel{
    background: linear-gradient(90deg,#e2e2e2 40px,transparent 40px);
    color: #1a6a38;
}
td.active{
    box-shadow: inset 0 0 0 2px #1f6b45;
    position: relative;
}
td.active::after{
    content: "";
    position: absolute;
    right: -3px;
    bottom: -3px;
    width: 7px;
    height: 7px;
    background: #1f6b45;
    border: 1px solid #fff;
}
.acct{
    display: flex;
    justify-content: space-between;
}
.a-f{
    padding: 0 9px 0 7px;
}
.a-m{
    padding: 0 8px 0 7px;
}
td.total{
    border-top: 2px solid #111;
    border-bottom: 4px double #111;
    border-left: 1px solid #d6d6d6;
}
td.big-t{
    font-size: 30px;
    padding-left: 4px;
}
td.serif{
    font-family: "Liberation Serif",serif;
    font-size: 29px;
    letter-spacing: -.2px;
}
tr > td.serif.m5:nth-child(11){
    padding-right: 5px;
}
.xl-cursor{
    position: absolute;
    left: 435px;
    top: 469px;
    width: 20px;
    height: 20px;
}
.resize-ico{
    position: absolute;
    left: 1880px;
    top: 1036px;
    width: 20px;
    height: 14px;
}
```
